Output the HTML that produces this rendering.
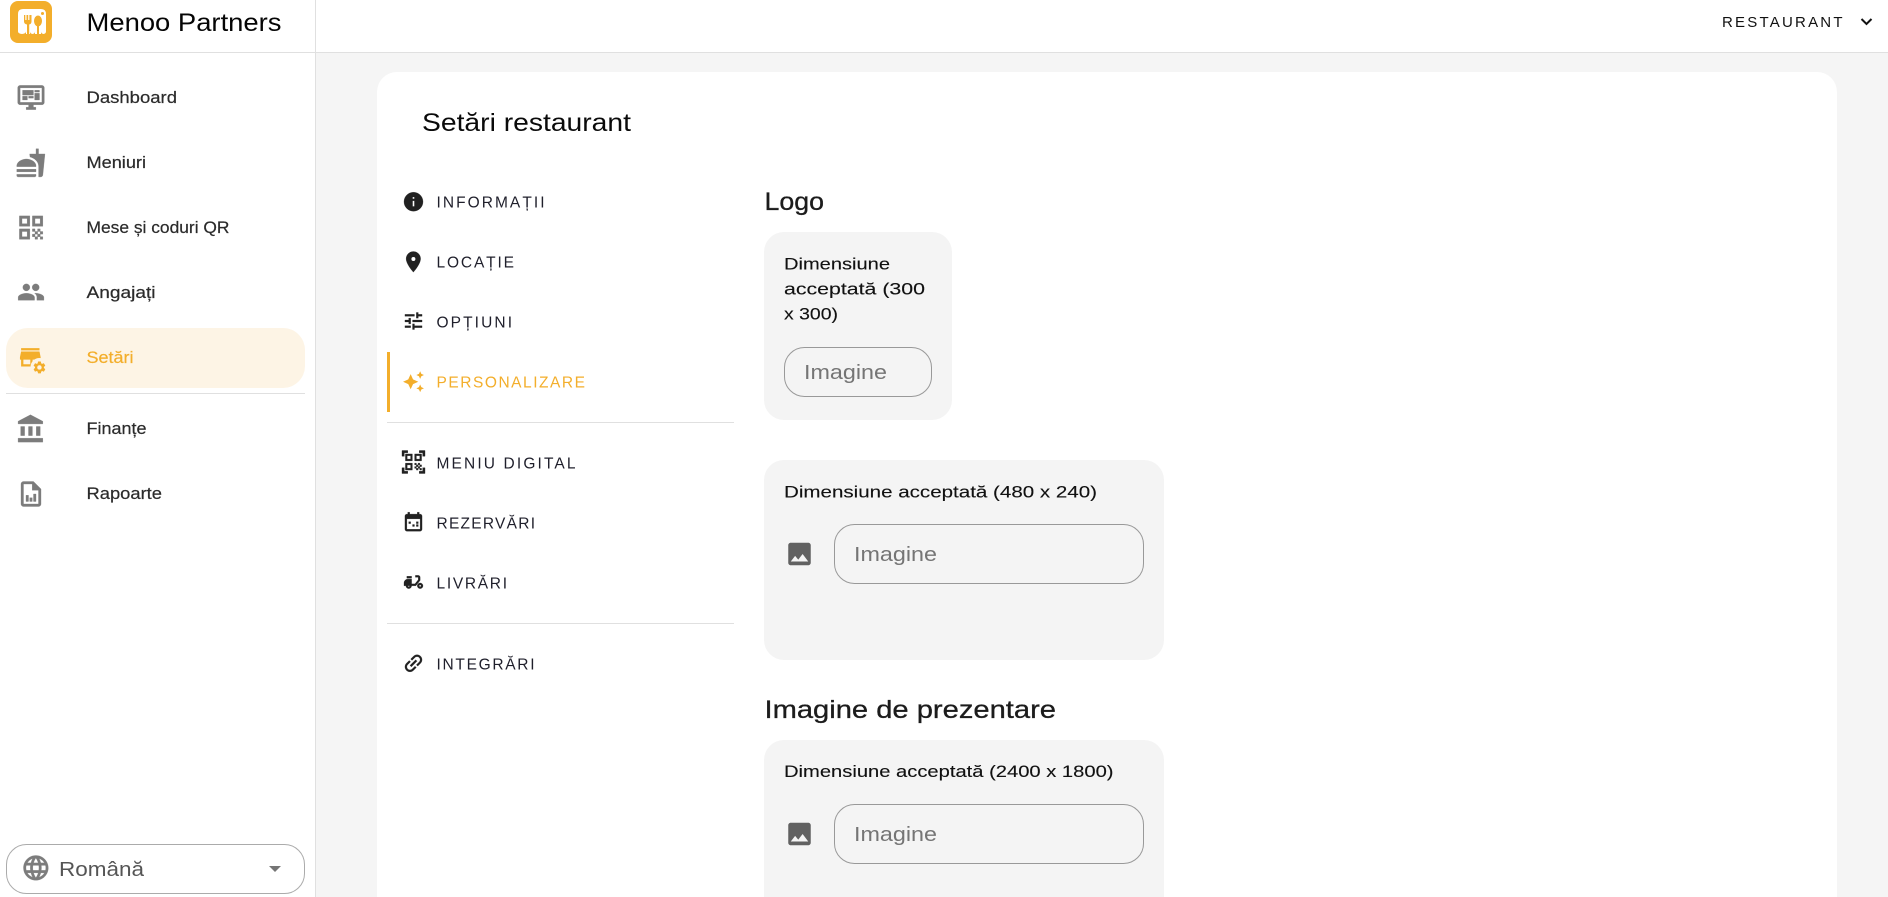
<!DOCTYPE html>
<html lang="ro"><head><meta charset="utf-8"><title>Menoo Partners</title>
<style>
html,body{margin:0;padding:0;width:1888px;height:897px;overflow:hidden;background:#f5f5f5}
svg{display:block}
text{font-family:"Liberation Sans",sans-serif}
.nav{font-size:16.5px;fill:#2b2b2b;stroke:#2b2b2b;stroke-width:.2}
.tab{font-size:15.5px;fill:#1f1f2b}
.dim{font-size:16.5px;fill:#111;stroke:#111;stroke-width:.12}
.ph{font-size:20.5px;fill:#757575}
.h{font-size:25px;fill:#1c1c1c;stroke:#1c1c1c;stroke-width:.3}
.si{fill:#7c7c7c;stroke:#7c7c7c;stroke-width:.25}
.ti{fill:#212121;stroke:#212121;stroke-width:.3}
</style></head><body>
<svg width="1888" height="897" viewBox="0 0 1888 897" xmlns="http://www.w3.org/2000/svg">
<rect width="1888" height="897" fill="#f5f5f5"/>
<!-- header & sidebar -->
<rect width="315" height="897" fill="#fff"/>
<rect x="315" width="1" height="897" fill="#e0e0e0"/>
<rect width="1888" height="52" fill="#fff"/>
<rect y="52" width="1888" height="1" fill="#e0e0e0"/>
<rect x="315" width="1" height="52" fill="#e0e0e0"/>
<!-- logo -->
<rect x="10" y="1" width="42" height="42" rx="8" fill="#f3ae2b"/>
<path fill="#fff" d="M18 14Q18 9 23 9H41Q46 9 46 14V31.500a2.500 2.500 0 0 1-5 0V20H35V31.500a2.500 2.500 0 0 1-5 0V20H26V31.500a4 2.500 0 0 1-8 0Z"/>
<rect x="26" y="20" width="4" height="14" fill="#fff"/><rect x="35" y="20" width="6" height="14" fill="#fff"/>
<path fill="#f3ae2b" d="M24 15h1.300v5h1.200v-5h1.700v5h1.200v-5H31.500v6.500q0 2.500-2.300 3V34h-2.200V24.500q-3-.5-3-3Z"/>
<ellipse cx="38" cy="21" rx="4" ry="5.500" fill="#f3ae2b"/><rect x="37" y="25" width="2" height="9" fill="#f3ae2b"/>
<circle cx="42.500" cy="13.500" r="1.500" fill="#f3ae2b"/>
<text x="86.500" y="31" font-size="25" fill="#050505" textLength="195" lengthAdjust="spacingAndGlyphs">Menoo Partners</text>
<!-- top right -->
<text x="1722" y="27" font-size="15" fill="#111" textLength="120.500" lengthAdjust="spacing">RESTAURANT</text>
<path d="M1861.500 19l5 5 5-5" fill="none" stroke="#111" stroke-width="2"/>
<!-- sidebar items -->
<path class="si" transform="translate(16.500 83) scale(1.21)" d="M21 2H3c-1.100 0-2 .9-2 2v12c0 1.100.9 2 2 2h7v2H8v2h8v-2h-2v-2h7c1.100 0 2-.9 2-2V4c0-1.100-.9-2-2-2zm0 14H3V4h18v12zM5 6h9v4H5zM15 6h4v1.500h-4zM15 8.500h4V14h-4zM5 11h4v3H5zM10 11h4v1.500h-4z"/>
<text class="nav" x="86.500" y="103" textLength="90.500" lengthAdjust="spacingAndGlyphs">Dashboard</text>
<path class="si" transform="translate(15.500 147.500) scale(1.28)" d="M18.060 22.990h1.660c.84 0 1.530-.64 1.630-1.460L23 5.050h-5V1h-1.970v4.050h-4.970l.3 2.340c1.710.47 3.310 1.320 4.270 2.260 1.440 1.420 2.430 2.890 2.430 5.290v8.050zM1 21.990V21h15.030v.99c0 .55-.45 1-1.010 1H2.010c-.56 0-1.010-.45-1.010-1zm15.030-7c.5-4-4.500-6-7.500-6s-8 2-7.500 6h15zM1.020 17h15v2h-15z"/>
<text class="nav" x="86.500" y="168" textLength="59.500" lengthAdjust="spacingAndGlyphs">Meniuri</text>
<path class="si" transform="translate(15.500 212) scale(1.3)" d="M3 11h8V3H3v8zm2-6h4v4H5V5zM3 21h8v-8H3v8zm2-6h4v4H5v-4zM13 3v8h8V3h-8zm6 6h-4V5h4v4zM19 19h2v2h-2zM13 13h2v2h-2zM15 15h2v2h-2zM13 17h2v2h-2zM15 19h2v2h-2zM17 17h2v2h-2zM17 13h2v2h-2zM19 15h2v2h-2z"/>
<text class="nav" x="86.500" y="233" textLength="143" lengthAdjust="spacingAndGlyphs">Mese și coduri QR</text>
<path class="si" transform="translate(17 278) scale(1.17)" d="M16 11c1.660 0 2.990-1.340 2.990-3S17.660 5 16 5c-1.660 0-3 1.340-3 3s1.340 3 3 3zm-8 0c1.660 0 2.990-1.340 2.990-3S9.660 5 8 5C6.340 5 5 6.340 5 8s1.340 3 3 3zm0 2c-2.330 0-7 1.170-7 3.500V19h14v-2.500c0-2.330-4.670-3.500-7-3.500zm8 0c-.29 0-.62.02-.97.05 1.160.84 1.970 1.970 1.970 3.450V19h6v-2.500c0-2.330-4.670-3.500-7-3.500z"/>
<text class="nav" x="86.500" y="298" textLength="69" lengthAdjust="spacingAndGlyphs">Angajați</text>
<rect x="6" y="328" width="299" height="60" rx="22" fill="#fdf4e5"/>
<path fill="#f3ae2b" transform="translate(16.500 343.500) scale(1.15)" d="M20 4H4v2h16V4zm1 10v-2l-1-5H4l-1 5v2h1v6h10v-6h4v6h2v-6h1zm-9 4H6v-4h6v4z"/>
<circle cx="39.500" cy="367" r="9" fill="#fdf4e5"/>
<path fill="#f3ae2b" transform="translate(32 360) scale(.62)" d="M19.140 12.940c.04-.3.06-.61.06-.94 0-.32-.02-.64-.07-.94l2.030-1.580c.18-.14.23-.41.12-.61l-1.920-3.320c-.12-.22-.37-.29-.59-.22l-2.390.96c-.5-.38-1.030-.7-1.620-.94l-.36-2.540c-.04-.24-.24-.41-.48-.41h-3.840c-.24 0-.43.17-.47.41l-.36 2.540c-.59.24-1.130.57-1.620.94l-2.390-.96c-.22-.08-.47 0-.59.22L2.740 8.870c-.12.21-.08.47.12.61l2.030 1.580c-.05.3-.09.63-.09.94s.02.64.07.94l-2.030 1.580c-.18.14-.23.41-.12.61l1.920 3.320c.12.22.37.29.59.22l2.390-.96c.5.38 1.030.7 1.620.94l.36 2.540c.05.24.24.41.48.41h3.840c.24 0 .44-.17.47-.41l.36-2.540c.59-.24 1.130-.56 1.620-.94l2.390.96c.22.08.47 0 .59-.22l1.920-3.320c.12-.22.07-.47-.12-.61l-2.010-1.580zM12 15.600c-1.980 0-3.600-1.620-3.600-3.600s1.620-3.600 3.600-3.600 3.600 1.620 3.600 3.600-1.620 3.600-3.600 3.600z"/>
<text class="nav" x="86.500" y="363" textLength="47" lengthAdjust="spacingAndGlyphs" style="fill:#f3ae2b;stroke:#f3ae2b">Setări</text>
<rect x="6" y="393" width="299" height="1" fill="#e0e0e0"/>
<path class="si" transform="translate(15.500 413.500) scale(1.3)" d="M4 10v7h3v-7H4zm6 0v7h3v-7h-3zM2 22h19v-3H2v3zm14-12v7h3v-7h-3zm-4.500-9L2 6v2h19V6l-9.500-5z"/>
<text class="nav" x="86.500" y="434" textLength="60" lengthAdjust="spacingAndGlyphs">Finanțe</text>
<path class="si" transform="translate(16 479) scale(1.25)" d="M14 2H6c-1.100 0-2 .9-2 2v16c0 1.100.9 2 2 2h12c1.100 0 2-.9 2-2V8l-6-6zm4 18H6V4h7v5h5v11zM8 13h2v5H8zM11 15h2v3h-2zM14 12h2v6h-2z"/>
<text class="nav" x="86.500" y="499" textLength="75.500" lengthAdjust="spacingAndGlyphs">Rapoarte</text>
<!-- language -->
<rect x="6.500" y="844.500" width="298" height="49" rx="20" fill="#fff" stroke="#ababab"/>
<path class="si" transform="translate(21 853) scale(1.24)" d="M11.990 2C6.470 2 2 6.480 2 12s4.470 10 9.990 10C17.520 22 22 17.520 22 12S17.520 2 11.990 2zm6.930 6h-2.950c-.32-1.250-.78-2.450-1.380-3.560 1.840.63 3.370 1.910 4.330 3.560zM12 4.040c.83 1.200 1.480 2.530 1.910 3.960h-3.820c.43-1.430 1.080-2.760 1.910-3.960zM4.260 14C4.100 13.360 4 12.690 4 12s.1-1.360.26-2h3.380c-.08.66-.14 1.320-.14 2 0 .68.06 1.340.14 2H4.260zm.82 2h2.950c.32 1.250.78 2.450 1.380 3.560-1.840-.63-3.370-1.900-4.330-3.560zm2.950-8H5.080c.96-1.660 2.490-2.930 4.330-3.560C8.810 5.550 8.350 6.750 8.030 8zM12 19.960c-.83-1.200-1.480-2.530-1.910-3.960h3.820c-.43 1.430-1.080 2.760-1.910 3.960zM14.340 14H9.660c-.09-.66-.16-1.320-.16-2 0-.68.07-1.350.16-2h4.680c.09.65.16 1.320.16 2 0 .68-.07 1.340-.16 2zm.25 5.560c.6-1.110 1.060-2.310 1.380-3.560h2.950c-.96 1.650-2.490 2.930-4.330 3.560zM16.360 14c.08-.66.14-1.320.14-2 0-.68-.06-1.340-.14-2h3.380c.16.64.26 1.310.26 2s-.1 1.360-.26 2h-3.380z"/>
<text x="59" y="876" font-size="20.500" fill="#555" textLength="85" lengthAdjust="spacingAndGlyphs">Română</text>
<path d="M269 866h12l-6 6z" fill="#757575"/>
<!-- card -->
<path d="M377 897V92a20 20 0 0 1 20-20H1817a20 20 0 0 1 20 20V897Z" fill="#fff"/>
<text x="422" y="131" font-size="25" fill="#0a0a0a" textLength="209" lengthAdjust="spacingAndGlyphs">Setări restaurant</text>
<!-- tabs -->
<path class="ti" transform="translate(402.100 190.300) scale(.95)" d="M12 2C6.480 2 2 6.480 2 12s4.480 10 10 10 10-4.480 10-10S17.520 2 12 2zm1 15h-2v-6h2v6zm0-8h-2V7h2v2z"/>
<text class="tab" x="436.500" y="207.500" textLength="108" lengthAdjust="spacing">INFORMAȚII</text>
<path class="ti" transform="translate(401 249.500) scale(1.03)" d="M12 2C8.130 2 5 5.130 5 9c0 5.250 7 13 7 13s7-7.750 7-13c0-3.870-3.130-7-7-7z"/>
<circle cx="413.400" cy="259" r="2" fill="#fff"/>
<text class="tab" x="436.500" y="267.500" textLength="77.500" lengthAdjust="spacing">LOCAȚIE</text>
<path class="ti" transform="translate(402.100 309.600) scale(.95)" d="M3 17v2h6v-2H3zM3 5v2h10V5H3zm10 16v-2h8v-2h-8v-2h-2v6h2zM7 9v2H3v2h4v2h2V9H7zm14 4v-2H11v2h10zm-6-4h2V7h4V5h-4V3h-2v6z"/>
<text class="tab" x="436.500" y="327.500" textLength="75.500" lengthAdjust="spacing">OPȚIUNI</text>
<rect x="387" y="352" width="3" height="60" fill="#f3ae2b"/>
<path fill="#f3ae2b" transform="translate(402.100 370.300) scale(.95)" d="M19 9l1.250-2.750L23 5l-2.750-1.250L19 1l-1.250 2.750L15 5l2.750 1.250L19 9zm-7.500.5L9 4 6.500 9.500 1 12l5.500 2.500L9 20l2.500-5.500L17 12l-5.500-2.500zM19 15l-1.250 2.750L15 19l2.750 1.250L19 23l1.250-2.750L23 19l-2.750-1.250L19 15z"/>
<text class="tab" x="436.500" y="387.500" textLength="148.500" lengthAdjust="spacing" style="fill:#f3ae2b">PERSONALIZARE</text>
<rect x="387" y="422" width="347" height="1" fill="#e0e0e0"/>
<path class="ti" transform="translate(399.700 448.200) scale(1.15)" d="M9.500 6.500v3h-3v-3h3M11 5H5v6h6V5zm-1.500 9.500v3h-3v-3h3M11 13H5v6h6v-6zm6.500-6.500v3h-3v-3h3M19 5h-6v6h6V5zm-6 8h1.500v1.500H13V13zm1.500 1.500H16V16h-1.500v-1.500zM16 13h1.500v1.500H16V13zm-3 3h1.500v1.500H13V16zm1.500 1.500H16V19h-1.500v-1.500zM16 16h1.500v1.500H16V16zm1.500-1.500H19V16h-1.500v-1.500zm0 3H19V19h-1.500v-1.500zM22 7h-2V4h-3V2h5v5zm0 15v-5h-2v3h-3v2h5zM2 22h5v-2H4v-3H2v5zM2 2v5h2V4h3V2H2z"/>
<text class="tab" x="436.500" y="468.500" textLength="139" lengthAdjust="spacing">MENIU DIGITAL</text>
<path class="ti" transform="translate(402.100 510.300) scale(.95)" d="M19 4h-1V2h-2v2H8V2H6v2H5c-1.110 0-2 .9-2 2v14c0 1.100.89 2 2 2h14c1.100 0 2-.9 2-2V6c0-1.100-.9-2-2-2zm0 16H5V9h14v11zM7 12h2v2H7zM11 15h2v2h-2zM15 12h2v2h-2zM15 15h2v2h-2z"/>
<text class="tab" x="436.500" y="528.500" textLength="98.500" lengthAdjust="spacing">REZERVĂRI</text>
<path class="ti" transform="translate(402.100 570.600) scale(.95)" d="M19 7c0-1.100-.9-2-2-2h-3v2h3v2.650L13.520 14H10V9H6c-2.210 0-4 1.790-4 4v3h2c0 1.660 1.340 3 3 3s3-1.340 3-3h4.480L19 10.350V7zM7 17c-.55 0-1-.45-1-1h2c0 .55-.45 1-1 1zM5 6h5v2H5zM19 13c-1.660 0-3 1.340-3 3s1.340 3 3 3 3-1.340 3-3-1.340-3-3-3zm0 4c-.55 0-1-.45-1-1s.45-1 1-1 1 .45 1 1-.45 1-1 1z"/>
<text class="tab" x="436.500" y="588.500" textLength="70.500" lengthAdjust="spacing">LIVRĂRI</text>
<rect x="387" y="623" width="347" height="1" fill="#e0e0e0"/>
<path class="ti" transform="translate(413.500 663.300) rotate(-45) scale(1) translate(-12 -12)" d="M3.900 12c0-1.710 1.390-3.100 3.100-3.100h4V7H7c-2.760 0-5 2.240-5 5s2.240 5 5 5h4v-1.900H7c-1.710 0-3.100-1.390-3.100-3.100zM8 13h8v-2H8v2zm9-6h-4v1.900h4c1.710 0 3.100 1.390 3.100 3.100s-1.390 3.100-3.100 3.100h-4V17h4c2.760 0 5-2.240 5-5s-2.240-5-5-5z"/>
<text class="tab" x="436.500" y="669.500" textLength="98" lengthAdjust="spacing">INTEGRĂRI</text>
<!-- right content -->
<text class="h" x="764.500" y="210" textLength="59.500" lengthAdjust="spacingAndGlyphs">Logo</text>
<rect x="764" y="232" width="188" height="188" rx="20" fill="#f4f4f4"/>
<text class="dim" x="784" y="269.500" textLength="106" lengthAdjust="spacingAndGlyphs">Dimensiune</text>
<text class="dim" x="784" y="294.500" textLength="141" lengthAdjust="spacingAndGlyphs">acceptată (300</text>
<text class="dim" x="784" y="319.500" textLength="54" lengthAdjust="spacingAndGlyphs">x 300)</text>
<rect x="784.500" y="347.500" width="147" height="49" rx="20" fill="none" stroke="#999"/>
<text class="ph" x="804" y="379" textLength="83" lengthAdjust="spacingAndGlyphs">Imagine</text>

<rect x="764" y="460" width="400" height="200" rx="20" fill="#f4f4f4"/>
<text class="dim" x="784" y="497.500" textLength="313" lengthAdjust="spacingAndGlyphs">Dimensiune acceptată (480 x 240)</text>
<path fill="#616161" transform="translate(784.500 539) scale(1.25)" d="M21 19V5c0-1.100-.9-2-2-2H5c-1.100 0-2 .9-2 2v14c0 1.100.9 2 2 2h14c1.100 0 2-.9 2-2zM8.500 13.500l2.500 3.010L14.500 12l4.500 6H5l3.500-4.500z"/>
<rect x="834.500" y="524.500" width="309" height="59" rx="20" fill="none" stroke="#999"/>
<text class="ph" x="854" y="561" textLength="83" lengthAdjust="spacingAndGlyphs">Imagine</text>

<text class="h" x="764.500" y="718" textLength="291.500" lengthAdjust="spacingAndGlyphs">Imagine de prezentare</text>
<path d="M764 897V760a20 20 0 0 1 20-20H1144a20 20 0 0 1 20 20V897Z" fill="#f4f4f4"/>
<text class="dim" x="784" y="777" textLength="329.500" lengthAdjust="spacingAndGlyphs">Dimensiune acceptată (2400 x 1800)</text>
<path fill="#616161" transform="translate(784.500 819) scale(1.25)" d="M21 19V5c0-1.100-.9-2-2-2H5c-1.100 0-2 .9-2 2v14c0 1.100.9 2 2 2h14c1.100 0 2-.9 2-2zM8.500 13.500l2.500 3.010L14.500 12l4.500 6H5l3.500-4.500z"/>
<rect x="834.500" y="804.500" width="309" height="59" rx="20" fill="none" stroke="#999"/>
<text class="ph" x="854" y="841" textLength="83" lengthAdjust="spacingAndGlyphs">Imagine</text>
</svg>
</body></html>
